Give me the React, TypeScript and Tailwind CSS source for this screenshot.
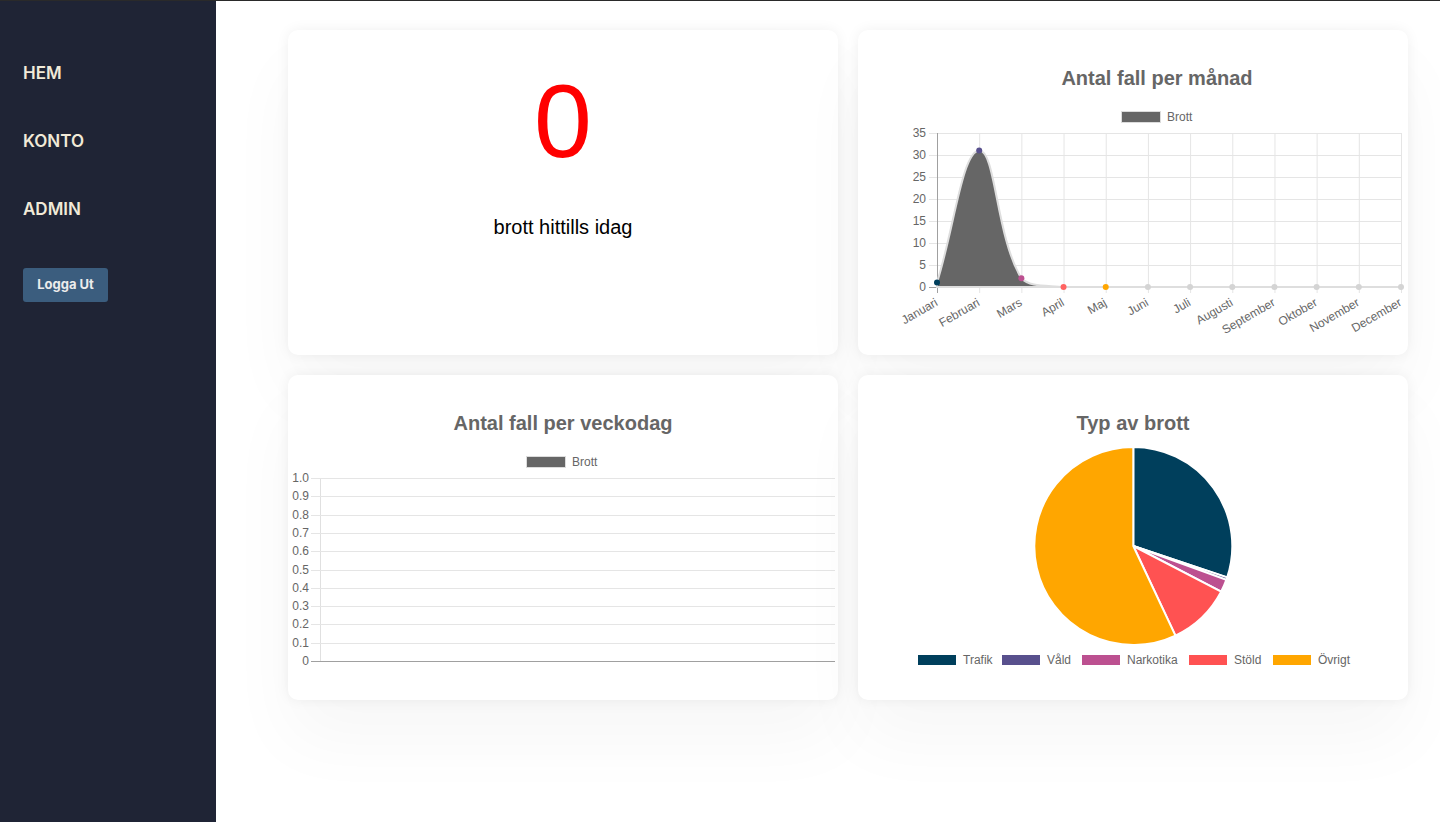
import React from 'react';

const MONTHS = ['Januari', 'Februari', 'Mars', 'April', 'Maj', 'Juni', 'Juli', 'Augusti', 'September', 'Oktober', 'November', 'December'];
const MONTH_DATA = [1, 31, 2, 0, 0, 0, 0, 0, 0, 0, 0, 0];
const POINT_COLORS = ['#003f5c', '#58508d', '#bc5090', '#ff6361', '#ffa600', '#d4d4d4', '#d4d4d4', '#d4d4d4', '#d4d4d4', '#d4d4d4', '#d4d4d4', '#d4d4d4'];

const PIE = [
  { label: 'Trafik', color: '#003f5c', deg: 108.5 },
  { label: 'Våld', color: '#58508d', deg: 1.5 },
  { label: 'Narkotika', color: '#bc5090', deg: 7.5 },
  { label: 'Stöld', color: '#ff5252', deg: 37.3 },
  { label: 'Övrigt', color: '#ffa600', deg: 205.2 },
];

const chartFont = '"Liberation Sans", Arial, Helvetica, sans-serif';

// builds a smooth path like chart.js (tension 0.4)
function splinePath(pts: { x: number; y: number }[], bottom: number) {
  const t = 0.4;
  const cps = pts.map((p, i) => {
    const p0 = pts[i - 1] || p;
    const p2 = pts[i + 1] || p;
    const d01 = Math.hypot(p.x - p0.x, p.y - p0.y);
    const d12 = Math.hypot(p2.x - p.x, p2.y - p.y);
    const sum = d01 + d12 || 1;
    const fa = (t * d01) / sum;
    const fb = (t * d12) / sum;
    return {
      c1: { x: p.x - fa * (p2.x - p0.x), y: Math.min(bottom, p.y - fa * (p2.y - p0.y)) },
      c2: { x: p.x + fb * (p2.x - p0.x), y: Math.min(bottom, p.y + fb * (p2.y - p0.y)) },
    };
  });
  let d = `M${pts[0].x},${pts[0].y}`;
  for (let i = 1; i < pts.length; i++) {
    const a = cps[i - 1].c2;
    const b = cps[i].c1;
    d += ` C${a.x},${a.y} ${b.x},${b.y} ${pts[i].x},${pts[i].y}`;
  }
  return d;
}

const Card: React.FC<{ children: React.ReactNode; title?: string; shiftTitle?: boolean }> = ({ children, title, shiftTitle }) => (
  <div className="bg-white rounded-[10px] h-[325px] flex flex-col shadow-[0_0_14px_rgba(0,0,0,0.06),0_40px_70px_rgba(0,0,0,0.035)]">
    {title && (
      <h2
        className={`pt-[36px] text-center text-[20px] leading-6 font-bold text-[#666666] ${shiftTitle ? 'pl-[48px]' : ''}`}
        style={{ fontFamily: chartFont }}
      >
        {title}
      </h2>
    )}
    {children}
  </div>
);

const Legend: React.FC<{ x: number; label: string; color: string; border?: string }> = ({ x, label, color, border }) => (
  <g>
    <rect x={x + 0.5} y={21.5} width={39} height={11} fill={color} stroke={border || '#ffffff'} strokeWidth={1} />
    <text x={x + 46} y={31} fontSize={12} fill="#666666" fontFamily={chartFont}>
      {label}
    </text>
  </g>
);

const MonthChart = () => {
  const left = 79;
  const right = 543;
  const top = 43;
  const bottom = 197;
  const step = (right - left) / 11;
  const yOf = (v: number) => bottom - (v * (bottom - top)) / 35;
  const pts = MONTH_DATA.map((v, i) => ({ x: left + i * step, y: yOf(v) }));
  const line = splinePath(pts, bottom);
  const area = `${line} L${right},${bottom} L${left},${bottom} Z`;

  return (
    <svg width={550} height={265} className="block overflow-visible">
      <Legend x={263} label="Brott" color="#666666" border="#dcdcdc" />
      {[0, 5, 10, 15, 20, 25, 30, 35].map((v) => (
        <g key={v}>
          <line x1={71} x2={right} y1={yOf(v) + 0.5} y2={yOf(v) + 0.5} stroke={v === 0 ? '#a0a0a0' : '#e5e5e5'} />
          <text x={68} y={yOf(v) + 4} textAnchor="end" fontSize={12} fill="#666666" fontFamily={chartFont}>
            {v}
          </text>
        </g>
      ))}
      {pts.map((p, i) => (
        <line key={i} x1={p.x + 0.5} x2={p.x + 0.5} y1={top} y2={bottom + 6} stroke={i === 0 ? '#a0a0a0' : '#e5e5e5'} />
      ))}
      <path d={area} fill="#666666" stroke="#dedede" strokeWidth={2} />
      {pts.map((p, i) => (
        <circle key={i} cx={p.x} cy={p.y} r={3} fill={POINT_COLORS[i]} />
      ))}
      {MONTHS.map((m, i) => (
        <text
          key={m}
          transform={`translate(${left + i * step - 3}, ${bottom + 10}) rotate(-30)`}
          y={9}
          textAnchor="end"
          fontSize={12}
          fill="#666666"
          fontFamily={chartFont}
        >
          {m}
        </text>
      ))}
    </svg>
  );
};

const WeekdayChart = () => {
  const left = 32;
  const right = 547;
  const top = 43;
  const bottom = 226;
  const ticks = [1.0, 0.9, 0.8, 0.7, 0.6, 0.5, 0.4, 0.3, 0.2, 0.1, 0];
  const yOf = (v: number) => bottom - v * (bottom - top);

  return (
    <svg width={550} height={265} className="block">
      <Legend x={238} label="Brott" color="#666666" border="#dcdcdc" />
      <line x1={left + 0.5} x2={left + 0.5} y1={top} y2={bottom} stroke="#e0e0e0" />
      {ticks.map((v) => (
        <g key={v}>
          <line x1={23} x2={right} y1={Math.round(yOf(v)) + 0.5} y2={Math.round(yOf(v)) + 0.5} stroke={v === 0 ? '#a0a0a0' : '#e5e5e5'} />
          <text x={21} y={Math.round(yOf(v)) + 4} textAnchor="end" fontSize={12} fill="#666666" fontFamily={chartFont}>
            {v === 0 ? '0' : v.toFixed(1)}
          </text>
        </g>
      ))}
    </svg>
  );
};

const PieChart = () => {
  const cx = 275.3;
  const cy = 111;
  const r = 99;
  let start = 0;
  const slices = PIE.map((s) => {
    const a0 = ((start - 90) * Math.PI) / 180;
    const a1 = ((start + s.deg - 90) * Math.PI) / 180;
    start += s.deg;
    const large = s.deg > 180 ? 1 : 0;
    const d = `M${cx},${cy} L${cx + r * Math.cos(a0)},${cy + r * Math.sin(a0)} A${r},${r} 0 ${large} 1 ${cx + r * Math.cos(a1)},${cy + r * Math.sin(a1)} Z`;
    return { ...s, d };
  });
  const legendX = [59, 143, 223, 330, 414];

  return (
    <svg width={550} height={265} className="block">
      {slices.map((s) => (
        <path key={s.label} d={s.d} fill={s.color} stroke="#ffffff" strokeWidth={2} strokeLinejoin="round" />
      ))}
      {PIE.map((s, i) => (
        <g key={s.label} transform="translate(0, 198)">
          <Legend x={legendX[i]} label={s.label} color={s.color} />
        </g>
      ))}
    </svg>
  );
};

export default function App() {
  return (
    <div className="h-screen flex border-t border-[#2a2a2a] bg-white overflow-hidden">
      {/* Sidebar */}
      <aside className="w-[216px] shrink-0 bg-[#1f2435] pl-[23px] pt-[60px]" style={{ fontFamily: 'Inter, "Noto Sans", sans-serif' }}>
        <nav className="flex flex-col gap-[44px]">
          {['HEM', 'KONTO', 'ADMIN'].map((item) => (
            <a key={item} href="#" className="text-[17px] leading-6 font-semibold text-[#f1ead8]">
              {item}
            </a>
          ))}
        </nav>
        <button className="mt-[47px] h-[34px] w-[85px] rounded-[3px] bg-[#3b5d7e] text-[13px] font-bold text-[#ececec]">
          Logga Ut
        </button>
      </aside>

      {/* Main */}
      <main className="flex-1 pl-[72px] pr-[32px] pt-[29px]">
        <div className="grid grid-cols-2 gap-5">
          <Card>
            <div className="flex flex-col items-center" style={{ fontFamily: chartFont }}>
              <div className="pt-[39px] text-[104px] leading-none text-[#ff0000]">0</div>
              <p className="mt-[40px] text-[20px] leading-7 text-black">brott hittills idag</p>
            </div>
          </Card>
          <Card title="Antal fall per månad" shiftTitle>
            <MonthChart />
          </Card>
          <Card title="Antal fall per veckodag">
            <WeekdayChart />
          </Card>
          <Card title="Typ av brott">
            <PieChart />
          </Card>
        </div>
      </main>
    </div>
  );
}
